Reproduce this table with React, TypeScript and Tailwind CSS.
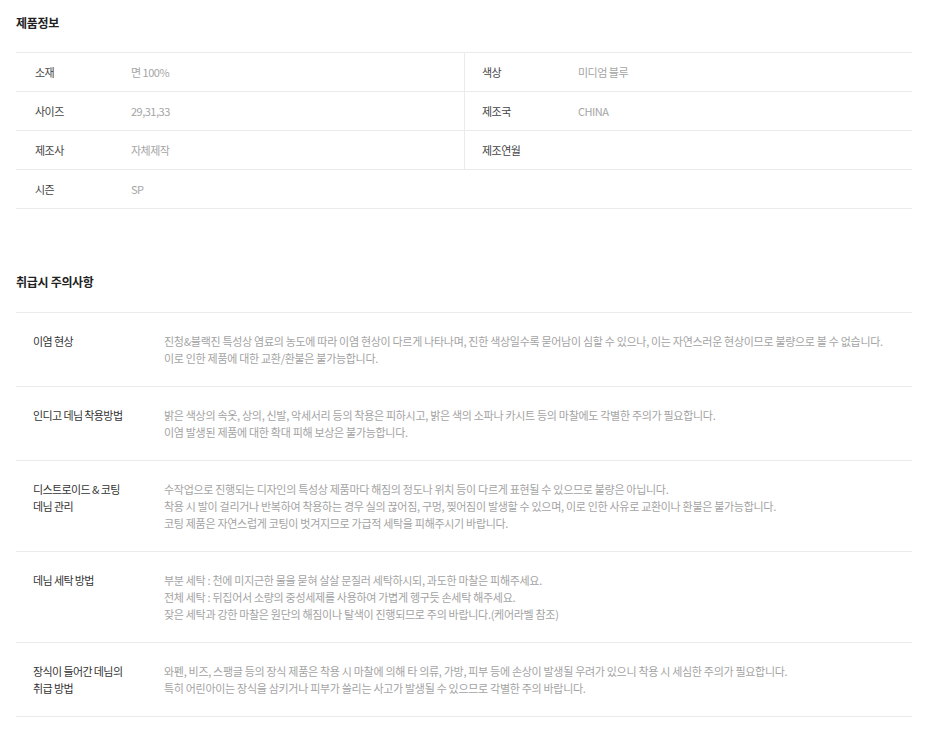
const specs = [
  [
    { label: '소재', value: '면 100%' },
    { label: '색상', value: '미디엄 블루' },
  ],
  [
    { label: '사이즈', value: '29,31,33' },
    { label: '제조국', value: 'CHINA' },
  ],
  [
    { label: '제조사', value: '자체제작' },
    { label: '제조연월', value: '' },
  ],
  [{ label: '시즌', value: 'SP' }, null],
];

const cautions = [
  {
    title: ['이염 현상'],
    lines: [
      '진청&블랙진 특성상 염료의 농도에 따라 이염 현상이 다르게 나타나며, 진한 색상일수록 묻어남이 심할 수 있으나, 이는 자연스러운 현상이므로 불량으로 볼 수 없습니다.',
      '이로 인한 제품에 대한 교환/환불은 불가능합니다.',
    ],
  },
  {
    title: ['인디고 데님 착용방법'],
    lines: [
      '밝은 색상의 속옷, 상의, 신발, 악세서리 등의 착용은 피하시고, 밝은 색의 소파나 카시트 등의 마찰에도 각별한 주의가 필요합니다.',
      '이염 발생된 제품에 대한 확대 피해 보상은 불가능합니다.',
    ],
  },
  {
    title: ['디스트로이드 & 코팅', '데님 관리'],
    lines: [
      '수작업으로 진행되는 디자인의 특성상 제품마다 해짐의 정도나 위치 등이 다르게 표현될 수 있으므로 불량은 아닙니다.',
      '착용 시 발이 걸리거나 반복하여 착용하는 경우 실의 끊어짐, 구멍, 찢어짐이 발생할 수 있으며, 이로 인한 사유로 교환이나 환불은 불가능합니다.',
      '코팅 제품은 자연스럽게 코팅이 벗겨지므로 가급적 세탁을 피해주시기 바랍니다.',
    ],
  },
  {
    title: ['데님 세탁 방법'],
    lines: [
      '부분 세탁 : 천에 미지근한 물을 묻혀 살살 문질러 세탁하시되, 과도한 마찰은 피해주세요.',
      '전체 세탁 : 뒤집어서 소량의 중성세제를 사용하여 가볍게 헹구듯 손세탁 해주세요.',
      '잦은 세탁과 강한 마찰은 원단의 해짐이나 탈색이 진행되므로 주의 바랍니다.(케어라벨 참조)',
    ],
  },
  {
    title: ['장식이 들어간 데님의', '취급 방법'],
    lines: [
      '와펜, 비즈, 스팽글 등의 장식 제품은 착용 시 마찰에 의해 타 의류, 가방, 피부 등에 손상이 발생될 우려가 있으니 착용 시 세심한 주의가 필요합니다.',
      '특히 어린아이는 장식을 삼키거나 피부가 쓸리는 사고가 발생될 수 있으므로 각별한 주의 바랍니다.',
    ],
  },
];

export default function App() {
  return (
    <div className="min-h-[748px] w-[936px] bg-white px-4 pt-[14px] font-['Noto_Sans_CJK_KR',sans-serif]">
      {/* 제품정보 */}
      <h2 className="mb-[20px] text-[12px] font-bold leading-[18px] tracking-[-0.3px] text-[#222]">제품정보</h2>
      <div className="w-[896px] border-t border-[#ebebeb]">
        {specs.map((row, i) => (
          <div key={i} className="grid h-[39px] grid-cols-2 border-b border-[#ebebeb]">
            {row.map((cell, j) =>
              cell ? (
                <div
                  key={j}
                  className={`flex items-center text-[11px] tracking-[-0.5px] ${j === 1 ? 'border-l border-[#ebebeb] pl-[17px]' : 'pl-[19px]'}`}
                >
                  <span className="w-[96px] text-[#444]">{cell.label}</span>
                  <span className="text-[#a5a5a5]">{cell.value}</span>
                </div>
              ) : (
                <div key={j} />
              )
            )}
          </div>
        ))}
      </div>

      {/* 취급시 주의사항 */}
      <h2 className="mb-[21px] mt-[64px] text-[12px] font-bold leading-[18px] tracking-[-0.3px] text-[#222]">취급시 주의사항</h2>
      <div className="w-[896px] border-t border-[#ebebeb]">
        {cautions.map((c, i) => (
          <div key={i} className="flex border-b border-[#ebebeb] pb-[19px] pl-[17px] pt-[20px] text-[11px] leading-[17px]">
            <div className="w-[131px] shrink-0 tracking-[-0.6px] text-[#333]">
              {c.title.map((t) => (
                <div key={t}>{t}</div>
              ))}
            </div>
            <div className="tracking-[-0.3px] text-[#a3a3a3]">
              {c.lines.map((l) => (
                <div key={l} className="whitespace-nowrap">{l}</div>
              ))}
            </div>
          </div>
        ))}
      </div>
    </div>
  );
}
